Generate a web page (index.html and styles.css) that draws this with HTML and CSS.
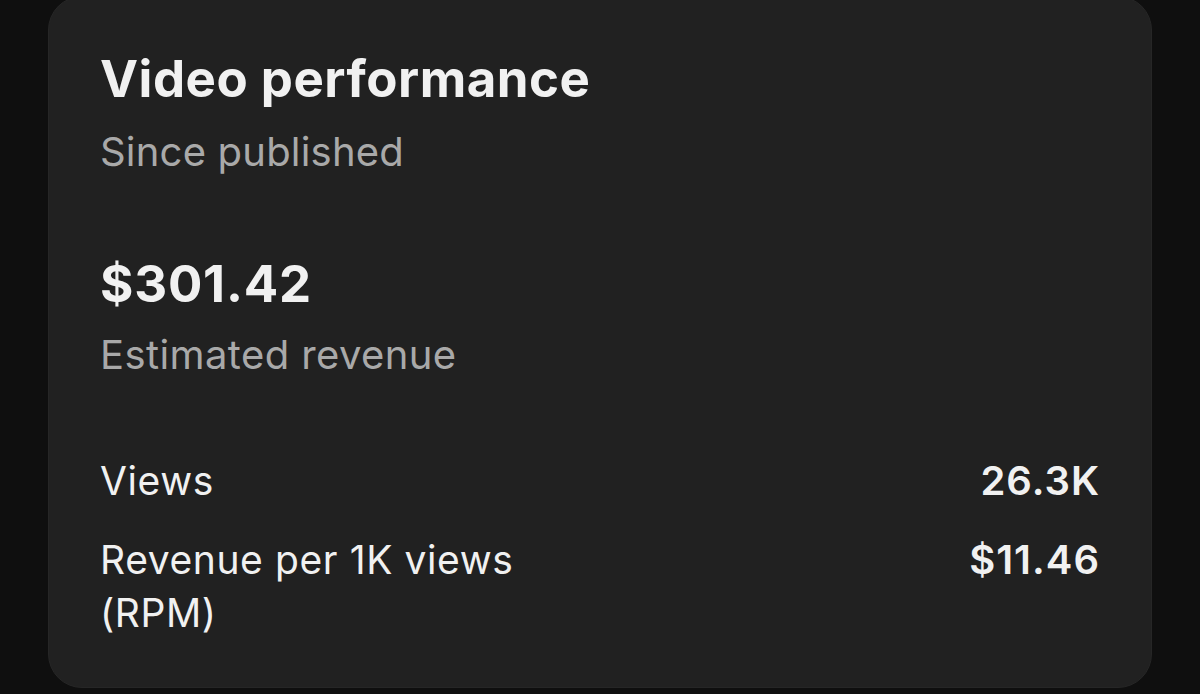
FILE: index.html
```html
<!DOCTYPE html>
<html lang="en">
<head>
<meta charset="utf-8">
<title>Video performance</title>
<link rel="stylesheet" href="styles.css">
</head>
<body>
<main class="page">
  <section class="card">
    <h1 class="title">Video performance</h1>
    <p class="subtitle">Since published</p>
    <div class="revenue">
      <div class="amount">$301.42</div>
      <div class="amount-label">Estimated revenue</div>
    </div>
    <div class="stats">
      <div class="stat-row">
        <span class="stat-label">Views</span>
        <span class="stat-value">26.3K</span>
      </div>
      <div class="stat-row">
        <span class="stat-label">Revenue per 1K views<br>(RPM)</span>
        <span class="stat-value">$11.46</span>
      </div>
    </div>
  </section>
</main>
</body>
</html>
```
FILE: styles.css
```css
html, body {
  margin: 0;
  padding: 0;
  background: #0f0f0f;
  height: 100%;
  overflow: hidden;
}
.page {
  padding: 0 48px;
}
.card {
  margin-top: -4px;
  height: 692px;
  box-sizing: border-box;
  background: #212121;
  border: 1px solid #262626;
  border-radius: 34px;
  padding: 52px 51px 0 51px;
  font-family: Inter, "Noto Sans", sans-serif;
  color: #f1f1f1;
}
.title {
  margin: 0;
  font-size: 51px;
  line-height: 60px;
  font-weight: 700;
  letter-spacing: 0.5px;
}
.subtitle {
  margin: 19px 0 0;
  font-size: 40px;
  line-height: 48px;
  letter-spacing: 0.2px;
  color: #a9a9a9;
}
.revenue {
  margin-top: 78px;
}
.amount {
  font-size: 51px;
  line-height: 60px;
  font-weight: 700;
  letter-spacing: 0.8px;
}
.amount-label {
  margin-top: 17px;
  font-size: 40px;
  line-height: 48px;
  letter-spacing: 0.4px;
  color: #a9a9a9;
}
.stats {
  margin-top: 75px;
  display: flex;
  flex-direction: column;
  gap: 26px;
}
.stat-row {
  display: flex;
  justify-content: space-between;
  align-items: baseline;
  font-size: 39px;
  line-height: 53px;
  letter-spacing: 0.6px;
}
.stat-value {
  font-size: 40px;
  font-weight: 600;
  letter-spacing: 1px;
}
```
